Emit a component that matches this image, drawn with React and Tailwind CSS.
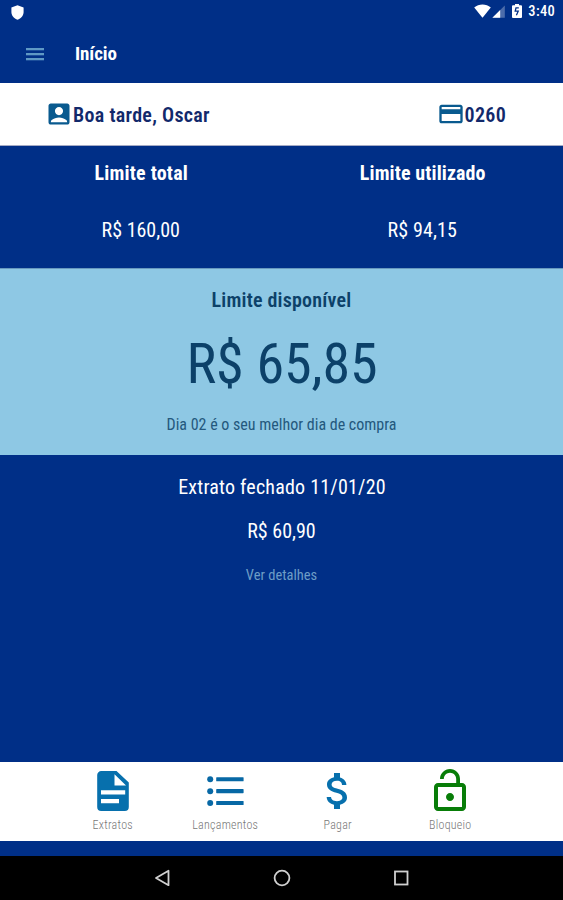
import React from 'react';
import { MdAccountBox, MdCreditCard, MdAttachMoney, MdLockOpen } from 'react-icons/md';

function IconExtrato({ className }) {
  return (
    <svg className={className} viewBox="0 0 48 48" fill="currentColor">
      <path
        fillRule="evenodd"
        d="M12.3 4 H27.5 L39.8 15.5 V40 A4 4 0 0 1 35.8 44 H12.2 A4 4 0 0 1 8.2 40 V8 A4 4 0 0 1 12.3 4 Z M25.5 7.3 V18.6 H37 Z M12 23.3 V27.6 H36.2 V23.3 Z M12 31.9 V36.2 H30 V31.9 Z"
      />
    </svg>
  );
}

function IconLista({ className }) {
  return (
    <svg className={className} viewBox="0 0 48 48" fill="currentColor">
      <circle cx="9.2" cy="12.2" r="3" />
      <circle cx="9.2" cy="24.2" r="3" />
      <circle cx="9.2" cy="36" r="3" />
      <rect x="15.2" y="10.2" width="27.4" height="4.1" rx="0.6" />
      <rect x="15.2" y="22.1" width="27.4" height="4.1" rx="0.6" />
      <rect x="15.2" y="34" width="27.4" height="4.1" rx="0.6" />
    </svg>
  );
}

const menuItems = [
  { label: 'Extratos', icon: IconExtrato, color: 'text-[#0770ad]' },
  { label: 'Lançamentos', icon: IconLista, color: 'text-[#0768a5]' },
  { label: 'Pagar', icon: MdAttachMoney, color: 'text-[#0770ad]' },
  { label: 'Bloqueio', icon: MdLockOpen, color: 'text-[#087d08]' },
];

function StatusBar() {
  return (
    <div className="flex h-[26px] items-center justify-between pl-[11px] pr-2 text-white">
      <svg className="-mt-0.5" width="13" height="15" viewBox="0 0 13 15" fill="currentColor">
        <path d="M6.5 0.3 L12.6 2.6 V7 C12.6 10.6 10 13.4 6.5 14.8 C3 13.4 0.4 10.6 0.4 7 V2.6 Z" />
      </svg>
      <div className="flex items-center pb-1">
        <svg width="17" height="14" viewBox="0 0 17 14" fill="currentColor">
          <path d="M0.2 3.6 C4.8 -0.4 12.2 -0.4 16.8 3.6 L8.5 13.8 Z" />
        </svg>
        <svg className="mt-px ml-px" width="13" height="13" viewBox="0 0 13 13" fill="currentColor">
          <path d="M0.4 12.8 L12.8 0.4 V12.8 Z" opacity="0.3" />
          <path d="M0.4 12.8 L8.2 5 V12.8 Z" />
        </svg>
        <svg className="ml-[7px]" width="10" height="14" viewBox="0 0 10 14">
          <path d="M3 0 H7 V1.2 H9 A1 1 0 0 1 10 2.2 V13 A1 1 0 0 1 9 14 H1 A1 1 0 0 1 0 13 V2.2 A1 1 0 0 1 1 1.2 H3 Z" fill="#fff" />
          <path d="M6.8 3.8 H4 L3.2 7.2 H6.2 L4.4 11.2" fill="none" stroke="#002f87" strokeWidth="1.3" />
        </svg>
        <span className="mt-0.5 ml-[6px] text-[14.5px] leading-none font-medium tracking-[0.3px]">3:40</span>
      </div>
    </div>
  );
}

function App() {
  return (
    <div className="flex h-[900px] w-[563px] flex-col overflow-hidden bg-[#002f87] font-['Roboto_Condensed','Roboto',sans-serif] font-stretch-condensed text-white">
      <StatusBar />

      <header className="flex h-[57px] items-center pl-[26px]">
        <svg className="-mt-0.5 text-[#5f99c5]" width="18" height="14" viewBox="0 0 18 14" fill="currentColor">
          <rect y="1" width="18" height="2.3" />
          <rect y="6" width="18" height="2.3" />
          <rect y="11" width="18" height="2.3" />
        </svg>
        <h1 className="-mt-0.5 ml-[31px] text-[19px] leading-none font-bold tracking-[-0.1px]">Início</h1>
      </header>

      {/* Saudação e cartão */}
      <div className="flex h-[63px] items-center justify-between border-b border-[#a5abc5] bg-white pr-[57px] pl-[45px] text-[20px] leading-none font-semibold tracking-[0.3px] text-[#12296b]">
        <div className="flex items-center">
          <MdAccountBox className="size-[28px] text-[#095a8f]" />
          <span className="mt-0.5">Boa tarde, Oscar</span>
        </div>
        <div className="flex items-center">
          <MdCreditCard className="size-[28px] text-[#095a8f]" />
          <span className="mt-0.5">0260</span>
        </div>
      </div>

      {/* Limites */}
      <div className="grid h-[122px] grid-cols-2 text-center text-[20px] leading-6">
        <div className="pt-[15px]">
          <p className="pl-px font-bold tracking-[0.2px]">Limite total</p>
          <p className="mt-[33px]">R$ 160,00</p>
        </div>
        <div className="pt-[15px]">
          <p className="pl-px font-bold tracking-[0.1px]">Limite utilizado</p>
          <p className="mt-[33px] tracking-[0.1px]">R$ 94,15</p>
        </div>
      </div>

      <div className="h-[187px] border-t border-[#6799bf] bg-[#8ec8e4] pt-[19px] text-center text-[#0c4169]">
        <p className="text-[20px] leading-6 font-semibold tracking-[0.2px]">Limite disponível</p>
        <p className="mt-4 pl-px text-[56px] leading-[72px] tracking-[-0.1px]">R$ 65,85</p>
        <p className="mt-[15px] text-[16px] leading-5 text-[#24587d]">Dia 02 é o seu melhor dia de compra</p>
      </div>

      <div className="flex-1 pt-5 text-center">
        <p className="pl-px text-[20px] leading-6 tracking-[0.2px]">Extrato fechado 11/01/20</p>
        <p className="mt-5 text-[20px] leading-6">R$ 60,90</p>
        <a href="#" className="mt-[23px] block text-[14.5px] leading-5 text-[#6d9dc6]">Ver detalhes</a>
      </div>

      <nav className="flex h-[79px] justify-center bg-white">
        <div className="grid w-[450px] grid-cols-4">
          {menuItems.map(({ label, icon: Icon, color }) => (
            <div key={label} className="flex flex-col items-center pt-[5px]">
              <Icon className={`size-12 shrink-0 ${color}`} />
              <span className="mt-0.5 text-[12px] leading-4 font-light tracking-[0.25px] text-[#777]">{label}</span>
            </div>
          ))}
        </div>
      </nav>

      {/* Botões do Android */}
      <div className="mt-[15px] flex h-11 items-center justify-center gap-[102px] bg-black text-[#d0d0d0]">
        <svg width="17" height="18" viewBox="0 0 17 18" fill="none" stroke="currentColor" strokeWidth="1.8">
          <path d="M2 9 L14.5 1.8 V16.2 Z" strokeLinejoin="round" />
        </svg>
        <svg width="18" height="18" viewBox="0 0 18 18" fill="none" stroke="currentColor" strokeWidth="1.8">
          <circle cx="9" cy="9" r="7.4" />
        </svg>
        <svg width="16" height="16" viewBox="0 0 16 16" fill="none" stroke="currentColor" strokeWidth="1.8">
          <rect x="2" y="1.5" width="12.5" height="13" />
        </svg>
      </div>
    </div>
  );
}

export default App;
